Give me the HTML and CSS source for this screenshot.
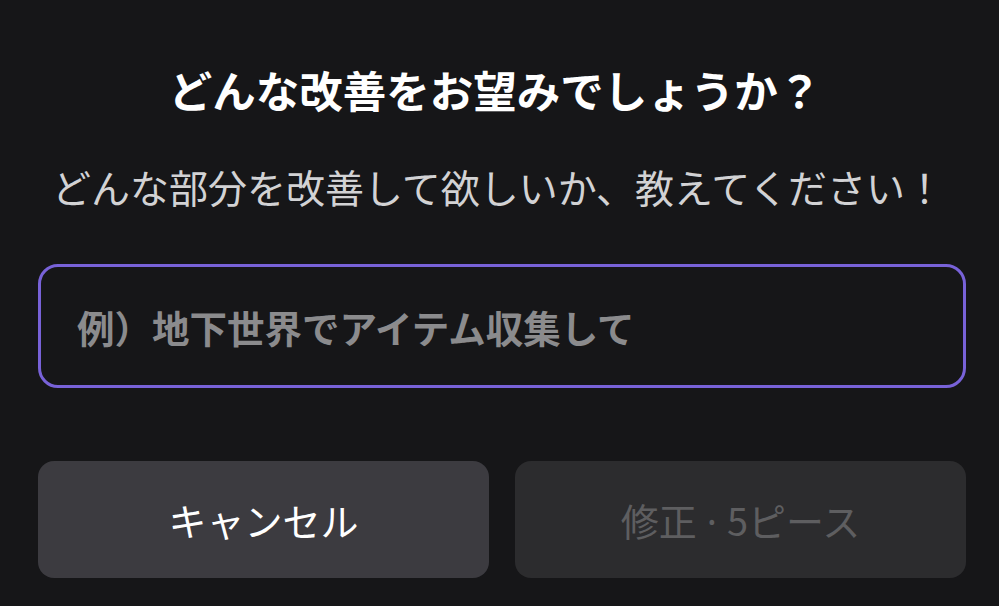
FILE: index.html
```html
<!DOCTYPE html>
<html lang="ja">
<head>
<meta charset="utf-8">
<link rel="stylesheet" href="styles.css">
</head>
<body>
<div class="dialog">
  <h1 class="title">どんな改善をお望みでしょうか？</h1>
  <p class="subtitle">どんな部分を改善して欲しいか、教えてください！</p>
  <div class="field">
    <input class="input" type="text" placeholder="例）地下世界でアイテム収集して">
  </div>
  <div class="actions">
    <button class="btn btn-cancel">キャンセル</button>
    <button class="btn btn-submit" disabled>修正<span class="dot">·</span>5ピース</button>
  </div>
</div>
</body>
</html>
```

FILE: styles.css
```css
html, body {
  margin: 0;
  padding: 0;
  background: #161618;
}
body {
  width: 999px;
  height: 606px;
  overflow: hidden;
  font-family: "Noto Sans CJK JP", "Noto Sans", sans-serif;
}
.dialog {
  display: flex;
  flex-direction: column;
  padding: 64px 33px 0 38px;
}
.title {
  margin: 0;
  font-size: 43.5px;
  line-height: 52px;
  font-weight: 700;
  color: #ffffff;
  text-align: center;
  padding-right: 14px;
}
.subtitle {
  margin: 47px 0 0 0;
  font-size: 39px;
  line-height: 46px;
  font-weight: 400;
  color: #d2d2d4;
  text-align: center;
  padding-right: 8px;
}
.field {
  margin-top: 55px;
  height: 124px;
  box-sizing: border-box;
  border: 3px solid #7862d8;
  border-radius: 20px;
  display: flex;
  align-items: center;
  padding: 0 36px;
}
.input {
  flex: 1;
  background: transparent;
  border: none;
  outline: none;
  font-family: inherit;
  font-size: 37.5px;
  font-weight: 700;
  color: #ffffff;
  padding: 0;
}
.input::placeholder {
  color: #8b8b8d;
}
.actions {
  margin-top: 73px;
  display: flex;
  gap: 26px;
}
.btn {
  flex: 1;
  height: 117px;
  border: none;
  border-radius: 16px;
  font-family: inherit;
  font-size: 38px;
  padding: 0;
}
.btn-cancel {
  background: #3c3b40;
  color: #ffffff;
  font-weight: 400;
}
.btn-submit {
  background: #2c2c2e;
  color: #5e5e60;
  font-weight: 400;
}
.dot {
  font-family: "Noto Sans", sans-serif;
  margin: 0 10px;
}
```
